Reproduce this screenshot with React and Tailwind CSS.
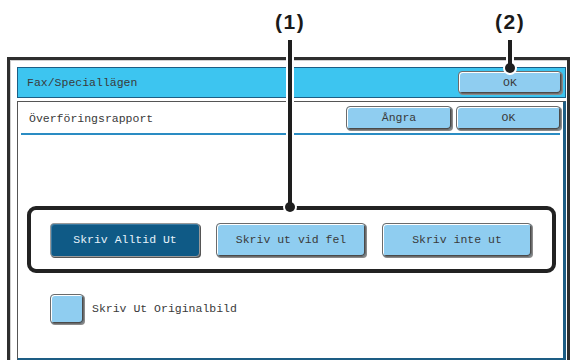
import React from 'react';

const mono = { fontFamily: '"Liberation Mono", "DejaVu Sans Mono", monospace' };

function KeyButton({ children, className = '' }) {
  return (
    <div
      className={`flex items-center justify-center rounded-[4px] border border-[#6b6b6b] bg-[#8fcdf0] text-[#3a3a3a] shadow-[inset_1px_1px_0_#ffffff,inset_-1px_-1px_0_#4a4a4a,1px_1px_0_#8a8a8a] ${className}`}
    >
      {children}
    </div>
  );
}

export default function App() {
  return (
    <div className="relative w-[570px] h-[360px] overflow-hidden bg-white text-[11.5px] text-[#3a3a3a]" style={mono}>
      {/* frame */}
      <div className="ml-[7px] mt-[57px] h-[320px] w-[563px] border-[3px] border-[#2e2e2e]">
        <div className="h-full border-l border-t border-[#cfcfcf] pl-[6px] pt-[6px] pr-[1px]">
          {/* header bar */}
          <div className="flex h-[31px] items-center justify-between border border-[#1c5f86] bg-[#3dc5f0] pl-[9px] pr-[3px]">
            <span>Fax/Speciallägen</span>
            <KeyButton className="h-[23px] w-[104px]">OK</KeyButton>
          </div>

          {/* content panel */}
          <div className="mt-[3px] h-[260px] border-l border-t border-[#555] border-r-[3px] border-b-[3px] border-r-[#1d5d84] border-b-[#1d5d84]">
            <div className="flex h-[31px] items-center justify-between pl-[11px] pr-[2px]">
              <span className="mt-[3px]">Överföringsrapport</span>
              <div className="flex gap-[4px]">
                <KeyButton className="h-[24px] w-[106px]">Ångra</KeyButton>
                <KeyButton className="h-[24px] w-[105px]">OK</KeyButton>
              </div>
            </div>
            <div className="mx-[3px] h-[2px] bg-[#2a8cc3]" />

            {/* option group */}
            <div className="ml-[9px] mt-[71px] flex h-[67px] w-[529px] items-center gap-[16px] rounded-[9px] border-[4px] border-[#222] pl-[19px]">
              <div className="flex h-[34px] w-[150px] items-center justify-center rounded-[4px] border border-[#9a9a9a] bg-[#0f5a86] text-[#e6f2fa] shadow-[inset_1px_1px_0_#3b7ba3,1px_1px_0_#555]">
                Skriv Alltid Ut
              </div>
              <KeyButton className="h-[34px] w-[150px]">Skriv ut vid fel</KeyButton>
              <KeyButton className="h-[34px] w-[150px]">Skriv inte ut</KeyButton>
            </div>

            <div className="ml-[32px] mt-[21px] flex items-center gap-[8px]">
              <KeyButton className="h-[30px] w-[34px]" />
              <span>Skriv Ut Originalbild</span>
            </div>
          </div>
        </div>
      </div>

      {/* annotation labels */}
      <div
        className="absolute left-[275px] top-[9px] text-[21px] font-bold leading-[26px] tracking-[1.5px] text-[#1a1a1a]"
        style={{ fontFamily: '"Liberation Sans", Arial, sans-serif' }}
      >
        (1)
      </div>
      <div
        className="absolute left-[495px] top-[9px] text-[21px] font-bold leading-[26px] tracking-[1.5px] text-[#1a1a1a]"
        style={{ fontFamily: '"Liberation Sans", Arial, sans-serif' }}
      >
        (2)
      </div>

      {/* annotation leader lines */}
      <svg className="absolute left-0 top-0" width="570" height="360">
        <g stroke="#ffffff" strokeWidth="8" fill="#ffffff">
          <line x1="290" y1="40" x2="290" y2="205" />
          <line x1="510" y1="40" x2="510" y2="66" />
        </g>
        <circle cx="290" cy="207" r="7" fill="#ffffff" />
        <circle cx="510" cy="68" r="7" fill="#ffffff" />
        <g stroke="#1e1e1e" strokeWidth="4">
          <line x1="290" y1="40" x2="290" y2="205" />
          <line x1="510" y1="40" x2="510" y2="66" />
        </g>
        <circle cx="290" cy="207" r="5" fill="#1e1e1e" />
        <circle cx="510" cy="68" r="5" fill="#1e1e1e" />
      </svg>
    </div>
  );
}
